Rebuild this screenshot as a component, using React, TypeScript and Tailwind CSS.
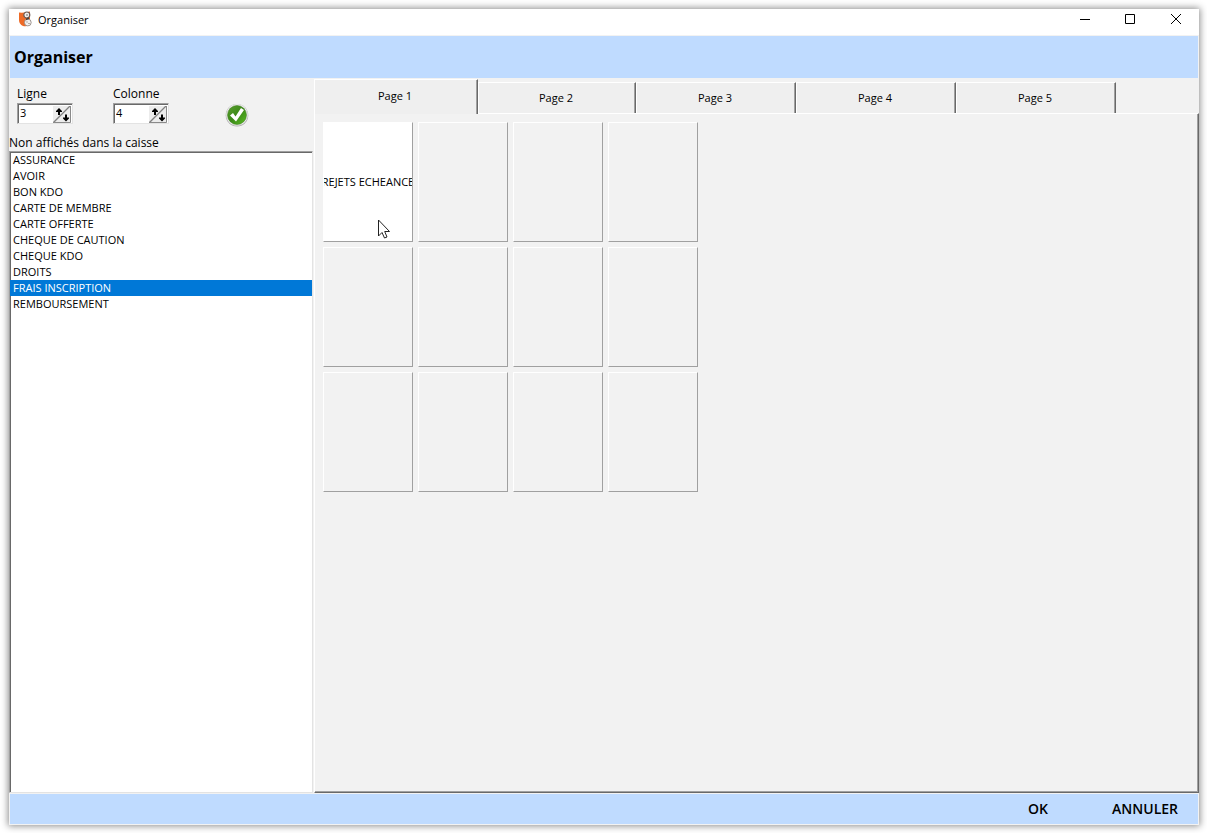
import React from 'react';
import clsx from 'clsx';

const items = [
  'ASSURANCE',
  'AVOIR',
  'BON KDO',
  'CARTE DE MEMBRE',
  'CARTE OFFERTE',
  'CHEQUE DE CAUTION',
  'CHEQUE KDO',
  'DROITS',
  'FRAIS INSCRIPTION',
  'REMBOURSEMENT',
];

const pages = ['Page 1', 'Page 2', 'Page 3', 'Page 4', 'Page 5'];

const cells = ['REJETS ECHEANCE', '', '', '', '', '', '', '', '', '', '', ''];

function AppLogo() {
  return (
    <svg width="16" height="16" viewBox="0 0 16 16" aria-hidden="true">
      <path d="M2 1.5 Q8 2 13 0.5 V14 Q9 16 6 15 Q2 13 2 9 Z" fill="#ee6a26" />
      <circle cx="9.8" cy="4" r="3" fill="#f3f0ee" stroke="#6b5a52" strokeWidth="1.2" />
      <circle cx="10.8" cy="11.5" r="3.4" fill="#f3f0ee" stroke="#8a817c" strokeWidth=".8" />
      <path d="M12 7 L9 8.5" stroke="#4d3f38" strokeWidth="1.4" />
      <path d="M9 4 h2 M9.5 11 h1 M11.5 12.5 h1" stroke="#77706c" />
    </svg>
  );
}

function CheckIcon() {
  return (
    <svg width="24" height="24" viewBox="0 0 24 24" aria-hidden="true">
      <defs>
        <linearGradient id="green" x1="0" y1="0" x2="1" y2="1">
          <stop offset="0" stopColor="#5c9e31" />
          <stop offset="0.5" stopColor="#3b8a17" />
          <stop offset="1" stopColor="#5fc026" />
        </linearGradient>
      </defs>
      <circle cx="12" cy="12.3" r="11.3" fill="#b0b0b0" />
      <circle cx="12" cy="11.8" r="10.8" fill="#ececec" />
      <circle cx="12" cy="12" r="9.5" fill="url(#green)" stroke="#3a7a1c" strokeWidth=".5" />
      <path d="M5 12.5 L8 10 L10.5 13.5 L16 5 L19 7 L11 18.5 Z" fill="#fff" />
    </svg>
  );
}

function SpinIcon() {
  return (
    <svg width="18" height="17" viewBox="0 0 18 17" aria-hidden="true">
      <path d="M0 0 H18 V17 H0 Z" fill="#ececec" />
      <path d="M0 17 L17 0" stroke="#808080" strokeWidth="1.3" />
      <path d="M17.5 0 V16.5 H0" stroke="#8a8a8a" fill="none" />
      <path d="M6 2 L9 5 V6 H7 V9 H5 V6 H3 V5 Z" fill="#000" />
      <path d="M13 15.5 L10 12.5 V11.5 H12 V8.5 H14 V11.5 H16 V12.5 Z" fill="#000" />
    </svg>
  );
}

function NumberField({ id, label, value }: { id: string; label: string; value: number }) {
  return (
    <div className="w-24">
      <label htmlFor={id} className="block text-xs leading-4">
        {label}
      </label>
      <div className="mt-px flex h-[21px] w-14 border border-t-[#a0a0a0] border-r-[#e3e3e3] border-b-[#e3e3e3] border-l-[#a0a0a0] bg-white pt-px pr-px inset-shadow-[1px_1px_0_#696969]">
        <input
          id={id}
          type="number"
          defaultValue={value}
          className="min-w-0 flex-1 appearance-none pb-0.5 pl-0.5 text-[11px] leading-4 outline-none [&::-webkit-inner-spin-button]:appearance-none"
        />
        <button type="button" aria-label={`Changer ${label}`}>
          <SpinIcon />
        </button>
      </div>
    </div>
  );
}

function TitleBar() {
  return (
    <div className="flex h-[26px] items-start bg-white pt-0.5 pr-4 pl-2">
      <AppLogo />
      <span className="ml-[5px] flex-1 text-[11px] leading-[18px]">Organiser</span>
      <div className="flex items-center gap-8 pt-px">
        <button type="button" aria-label="Réduire">
          <svg width="14" height="14" viewBox="0 0 14 14" stroke="#000">
            <path d="M3 7.5 H13" />
          </svg>
        </button>
        <button type="button" aria-label="Agrandir">
          <svg width="14" height="14" viewBox="0 0 14 14" stroke="#000" fill="none">
            <path d="M2.5 2.5 H11.5 V11.5 H2.5 Z" />
          </svg>
        </button>
        <button type="button" aria-label="Fermer">
          <svg width="14" height="14" viewBox="0 0 14 14" stroke="#000">
            <path d="M2 2 L12 12 M12 2 L2 12" />
          </svg>
        </button>
      </div>
    </div>
  );
}

function Sidebar() {
  return (
    <div className="flex w-[305px] shrink-0 flex-col">
      <div className="flex h-[57px] pt-2 pl-2">
        <NumberField id="ligne" label="Ligne" value={3} />
        <NumberField id="colonne" label="Colonne" value={4} />
        <button type="button" aria-label="Valider" className="mt-[17px] ml-4 h-6">
          <CheckIcon />
        </button>
      </div>
      <label htmlFor="caisse" className="block text-xs leading-4">
        Non affichés dans la caisse
      </label>
      <select
        id="caisse"
        size={10}
        defaultValue="FRAIS INSCRIPTION"
        className="w-[304px] flex-1 appearance-none overflow-hidden border border-t-[#a0a0a0] border-r-[#e3e3e3] border-b-[#e3e3e3] border-l-[#a0a0a0] bg-white text-[11px] inset-shadow-[1px_1px_0_#696969] outline-none"
      >
        {items.map(item => (
          <option
            key={item}
            className="h-4 min-h-4 px-[3px] py-0 leading-4 text-black checked:bg-[linear-gradient(#0078d7,#0078d7)] checked:text-white"
          >
            {item}
          </option>
        ))}
      </select>
    </div>
  );
}

function Tabs() {
  return (
    <div role="tablist" className="flex h-[35px] items-end">
      {pages.map((page, i) => (
        <button
          key={page}
          type="button"
          role="tab"
          aria-selected={i === 0}
          className={clsx(
            'border-t border-r border-l border-t-white border-r-[#696969] border-l-white bg-[#efefef] pr-0.5 text-[11px] leading-4 inset-shadow-[-1px_0_0_#a0a0a0]',
            i === 0 && 'z-10 -mb-px h-[35px] w-[164px] pb-0.5',
            i === 1 && 'h-[31px] w-[158px]',
            i > 1 && 'h-[31px] w-40'
          )}
        >
          {page}
        </button>
      ))}
    </div>
  );
}

function Grid() {
  return (
    <div className="grid grid-cols-[repeat(4,90px)] gap-[5px]">
      {cells.map((cell, i) => (
        <button
          key={i}
          type="button"
          aria-label={cell || `Case ${i + 1}`}
          className={clsx(
            'relative flex h-[120px] items-center justify-center overflow-hidden border border-t-white border-r-[#a0a0a0] border-b-[#a0a0a0] border-l-white text-[11px] whitespace-nowrap',
            cell && 'bg-white'
          )}
        >
          {cell}
          {cell && (
            <svg className="absolute top-24 left-[53px]" width="13" height="20" viewBox="0 0 13 20">
              <path
                d="M1.5 1 V17 L5 13.5 L7.5 19 L10 18 L7.7 12.5 H12.5 Z"
                fill="#fff"
                stroke="#222"
              />
            </svg>
          )}
        </button>
      ))}
    </div>
  );
}

function App() {
  return (
    <div className="flex min-h-screen bg-white pt-[9px] pr-2 pb-2 pl-[9px] font-['Open_Sans',sans-serif] text-black">
      <div className="flex flex-1 flex-col bg-[#f2f2f2] shadow-[0_0_7px_1px_rgba(0,0,0,0.45)]">
        <TitleBar />
        <h1 className="mx-px mt-px flex h-[42px] items-center bg-[#bfdbff] pl-1 text-base font-bold">
          Organiser
        </h1>
        <div className="flex flex-1">
          <Sidebar />
          <div className="flex flex-1 flex-col">
            <Tabs />
            <div className="flex-1 border border-t-white border-r-[#696969] border-b-[#696969] border-l-white pt-2 pl-2 inset-shadow-[-1px_-1px_0_#a0a0a0]">
              <Grid />
            </div>
          </div>
        </div>
        <div className="m-px flex h-[30px] items-center justify-end gap-16 bg-[#bfdbff] pr-5 text-sm font-semibold">
          <button type="button">OK</button>
          <button type="button">ANNULER</button>
        </div>
      </div>
    </div>
  );
}

export default App;
